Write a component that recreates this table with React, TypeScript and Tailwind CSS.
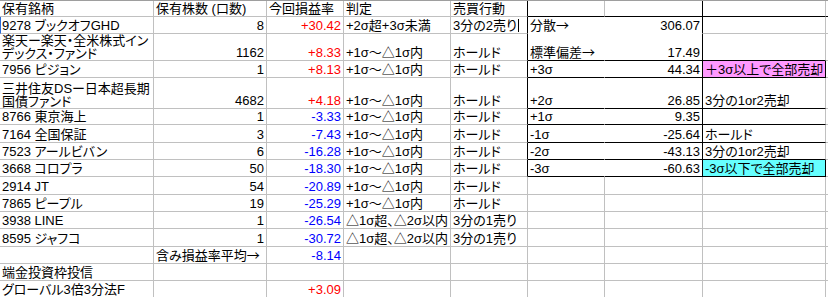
type Line = "g" | "k" | "n";

type Cell = {
  t?: string;
  a?: "r";
  c?: "red" | "blue";
  bg?: "pink" | "cyan";
  r?: Line;
  b?: Line;
  sel?: boolean;
  cur?: boolean;
};

const rightLine: Record<Line, string> = {
  g: "border-r-[#c0c0c0]",
  k: "border-r-black",
  n: "border-r-white",
};

const bottomLine: Record<Line, string> = {
  g: "border-b-[#c0c0c0]",
  k: "border-b-black",
  n: "border-b-white",
};

const hold = "+1σ～△1σ内";
const minus = "△1σ超、△2σ以内";

// A..I columns, one array per spreadsheet row
const rows: Cell[][] = [
  [
    { t: "保有銘柄" },
    { t: "保有株数 (口数)" },
    { t: "今回損益率" },
    { t: "判定" },
    { t: "売買行動", r: "k" },
    { b: "k" },
    { b: "k", r: "k" },
    { b: "k" },
    { b: "k", r: "n" },
  ],
  [
    { t: "9278 ブックオフGHD", sel: true },
    { t: "8", a: "r" },
    { t: "+30.42", a: "r", c: "red" },
    { t: "+2σ超+3σ未満" },
    { t: "3分の2売り", r: "k", cur: true },
    { t: "分散→", r: "n", b: "n" },
    { t: "306.07", a: "r", r: "k", b: "n" },
    {},
    { r: "n" },
  ],
  [
    { t: "楽天ー楽天・全米株式イン\nデックス・ファンド" },
    { t: "1162", a: "r" },
    { t: "+8.33", a: "r", c: "red" },
    { t: hold },
    { t: "ホールド", r: "k" },
    { t: "標準偏差→", r: "n", b: "k" },
    { t: "17.49", a: "r", r: "k", b: "k" },
    { b: "k" },
    { r: "n" },
  ],
  [
    { t: "7956 ピジョン" },
    { t: "1", a: "r" },
    { t: "+8.13", a: "r", c: "red" },
    { t: hold },
    { t: "ホールド", r: "k" },
    { t: "+3σ", r: "n", b: "k" },
    { t: "44.34", a: "r", r: "k", b: "k" },
    { t: "＋3σ以上で全部売却", bg: "pink", r: "k", b: "k" },
    { r: "n" },
  ],
  [
    { t: "三井住友DSー日本超長期\n国債ファンド" },
    { t: "4682", a: "r" },
    { t: "+4.18", a: "r", c: "red" },
    { t: hold },
    { t: "ホールド", r: "k" },
    { t: "+2σ", r: "n", b: "k" },
    { t: "26.85", a: "r", r: "k", b: "k" },
    { t: "3分の1or2売却", b: "k" },
    { r: "n" },
  ],
  [
    { t: "8766 東京海上" },
    { t: "1", a: "r" },
    { t: "-3.33", a: "r", c: "blue" },
    { t: hold },
    { t: "ホールド", r: "k" },
    { t: "+1σ", r: "n", b: "k" },
    { t: "9.35", a: "r", r: "k", b: "k" },
    { b: "k" },
    { r: "n" },
  ],
  [
    { t: "7164 全国保証" },
    { t: "3", a: "r" },
    { t: "-7.43", a: "r", c: "blue" },
    { t: hold },
    { t: "ホールド", r: "k" },
    { t: "-1σ", r: "n", b: "k" },
    { t: "-25.64", a: "r", r: "k", b: "k" },
    { t: "ホールド", b: "k" },
    { r: "n" },
  ],
  [
    { t: "7523 アールビバン" },
    { t: "6", a: "r" },
    { t: "-16.28", a: "r", c: "blue" },
    { t: hold },
    { t: "ホールド", r: "k" },
    { t: "-2σ", r: "n", b: "k" },
    { t: "-43.13", a: "r", r: "k", b: "k" },
    { t: "3分の1or2売却", b: "k" },
    { r: "n" },
  ],
  [
    { t: "3668 コロプラ" },
    { t: "50", a: "r" },
    { t: "-18.30", a: "r", c: "blue" },
    { t: hold },
    { t: "ホールド", r: "k" },
    { t: "-3σ", r: "n", b: "k" },
    { t: "-60.63", a: "r", r: "k", b: "k" },
    { t: "-3σ以下で全部売却", bg: "cyan", r: "k", b: "k" },
    { r: "n" },
  ],
  [
    { t: "2914 JT" },
    { t: "54", a: "r" },
    { t: "-20.89", a: "r", c: "blue" },
    { t: hold },
    { t: "ホールド" },
    {},
    {},
    {},
    { r: "n" },
  ],
  [
    { t: "7865 ピープル" },
    { t: "19", a: "r" },
    { t: "-25.29", a: "r", c: "blue" },
    { t: hold },
    { t: "ホールド" },
    {},
    {},
    {},
    { r: "n" },
  ],
  [
    { t: "3938 LINE" },
    { t: "1", a: "r" },
    { t: "-26.54", a: "r", c: "blue" },
    { t: minus },
    { t: "3分の1売り" },
    {},
    {},
    {},
    { r: "n" },
  ],
  [
    { t: "8595 ジャフコ" },
    { t: "1", a: "r" },
    { t: "-30.72", a: "r", c: "blue" },
    { t: minus },
    { t: "3分の1売り" },
    {},
    {},
    {},
    { r: "n" },
  ],
  [
    {},
    { t: "含み損益率平均→" },
    { t: "-8.14", a: "r", c: "blue" },
    {},
    {},
    {},
    {},
    {},
    { r: "n" },
  ],
  [
    { t: "端金投資枠投信" },
    {},
    {},
    {},
    {},
    {},
    {},
    {},
    { r: "n" },
  ],
  [
    { t: "グローバル3倍3分法F" },
    {},
    { t: "+3.09", a: "r", c: "red" },
    {},
    {},
    {},
    {},
    {},
    { r: "n" },
  ],
];

function SheetCell({ cell }: { cell: Cell }) {
  const text = cell.t ?? "";
  const multi = text.includes("\n");
  const arrow = text.endsWith("→");
  return (
    <div
      className={[
        "flex items-end border-r border-b px-[2px] whitespace-pre",
        rightLine[cell.r ?? "g"],
        bottomLine[cell.b ?? "g"],
        cell.a === "r" ? "justify-end" : "justify-start",
        cell.c === "red" ? "text-[#ff0000]" : cell.c === "blue" ? "text-[#0000ff]" : "text-black",
        cell.bg === "pink" ? "bg-[#ff99ff]" : cell.bg === "cyan" ? "bg-[#66ffff]" : "bg-white",
        cell.sel ? "border-l border-l-[#2a6ad6] pl-px" : "",
        multi ? "leading-[13px]" : "leading-[15px]",
      ].join(" ")}
    >
      <span>
        {arrow ? text.slice(0, -1) : text}
        {arrow && <span className="font-['Noto_Sans_CJK_JP',sans-serif]">→</span>}
        {cell.cur && <span className="ml-px inline-block h-[13px] w-px bg-black align-[-2px]" />}
      </span>
    </div>
  );
}

export default function App() {
  return (
    <div className="h-[297px] w-[828px] overflow-hidden bg-white font-['Liberation_Sans','Noto_Sans_CJK_JP',sans-serif] text-[13px] [font-feature-settings:'palt']">
      <div className="h-px bg-[#9e9e9e]" />
      <div className="grid grid-cols-[154px_113px_77px_107px_77px_77px_98px_123px_2px] grid-rows-[16px_17px_27px_17px_31px_16px_18px_17px_17px_18px_17px_17px_18px_17px_17px_17px]">
        {rows.map((row, ri) => row.map((cell, ci) => <SheetCell key={`${ri}-${ci}`} cell={cell} />))}
      </div>
    </div>
  );
}
